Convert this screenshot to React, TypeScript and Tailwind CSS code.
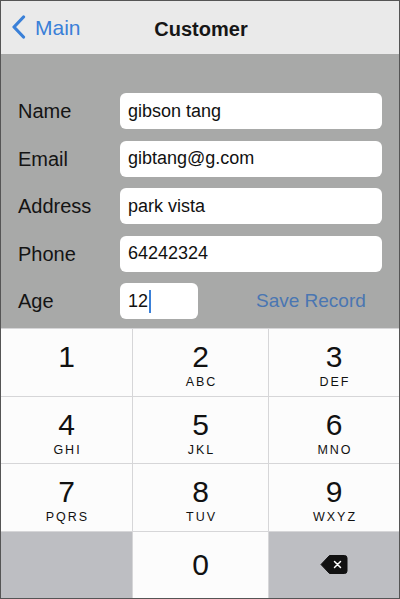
import React from "react";

const fields = [
  { label: "Name", value: "gibson tang" },
  { label: "Email", value: "gibtang@g.com" },
  { label: "Address", value: "park vista" },
  { label: "Phone", value: "64242324" },
];

const keys = [
  { digit: "1", letters: "" },
  { digit: "2", letters: "ABC" },
  { digit: "3", letters: "DEF" },
  { digit: "4", letters: "GHI" },
  { digit: "5", letters: "JKL" },
  { digit: "6", letters: "MNO" },
  { digit: "7", letters: "PQRS" },
  { digit: "8", letters: "TUV" },
  { digit: "9", letters: "WXYZ" },
];

function BackspaceIcon() {
  return (
    <svg width="28" height="21" viewBox="0 0 28 21">
      <path
        d="M9.5 1.5 H24.5 a2.5 2.5 0 0 1 2.5 2.5 V17 a2.5 2.5 0 0 1 -2.5 2.5 H9.5 L1 10.5 Z"
        fill="#111"
        stroke="#111"
        strokeLinejoin="round"
      />
      <path d="M14.5 7.5 L20.5 13.5 M20.5 7.5 L14.5 13.5" stroke="#fff" strokeWidth="1.5" strokeLinecap="round" />
    </svg>
  );
}

export default function App() {
  return (
    <div
      className="w-[400px] h-[599px] border border-[#555] flex flex-col overflow-hidden"
      style={{ fontFamily: '"Liberation Sans", Arial, sans-serif' }}
    >
      {/* Nav bar */}
      <div className="h-[53px] bg-[#eaeaea] flex items-center relative shrink-0">
        <div className="flex items-center pl-[10px] gap-[9px] text-[#3a80d8]">
          <svg width="15" height="24" viewBox="0 0 15 24" className="mt-[-1px]">
            <path d="M12.5 2 L3 12 L12.5 22" fill="none" stroke="#3a80d8" strokeWidth="3.2" strokeLinecap="round" strokeLinejoin="round" />
          </svg>
          <span className="text-[21px] leading-none">Main</span>
        </div>
        <div className="absolute inset-0 flex items-center justify-center pointer-events-none">
          <span className="text-[20px] font-bold text-[#161616] leading-none ml-[2px] mt-[2px]">Customer</span>
        </div>
      </div>

      {/* Form */}
      <div className="flex-1 bg-[#a8a9a8] pt-[39px] flex flex-col gap-[11.5px]">
        {fields.map((f) => (
          <div key={f.label} className="flex items-center h-[36px] pl-[17px] pr-[17px]">
            <span className="w-[102px] text-[20px] text-[#141414]">{f.label}</span>
            <div className="flex-1 h-full bg-white rounded-[6px] flex items-center pl-[8px] text-[18px] text-[#111]">
              {f.value}
            </div>
          </div>
        ))}
        <div className="flex items-center h-[36px] pl-[17px] pr-[17px]">
          <span className="w-[102px] text-[20px] text-[#141414]">Age</span>
          <div className="w-[78px] h-full bg-white rounded-[6px] flex items-center pl-[8px] text-[18px] text-[#111]">
            12
            <span className="w-[2px] h-[23px] bg-[#3a80d8] ml-[1px]" />
          </div>
          <span className="ml-[58px] text-[19px] text-[#4a76b2]">Save Record</span>
        </div>
      </div>

      {/* Keypad */}
      <div className="h-[270px] shrink-0 bg-[#d6d6d8] grid grid-cols-[131px_1fr_130px] grid-rows-4 gap-px pt-px">
        {keys.map((k) => (
          <div key={k.digit} className="bg-[#fcfcfc] flex flex-col items-center pt-[10px]">
            <span className="text-[30px] leading-[36px] text-[#111]">{k.digit}</span>
            <span className="text-[12.5px] leading-[14px] tracking-[2px] text-[#111] pl-[2px]">{k.letters}</span>
          </div>
        ))}
        <div className="bg-[#bdbec2]" />
        <div className="bg-[#fcfcfc] flex items-center justify-center">
          <span className="text-[30px] leading-none text-[#111]">0</span>
        </div>
        <div className="bg-[#bdbec2] flex items-center justify-center">
          <BackspaceIcon />
        </div>
      </div>
    </div>
  );
}
